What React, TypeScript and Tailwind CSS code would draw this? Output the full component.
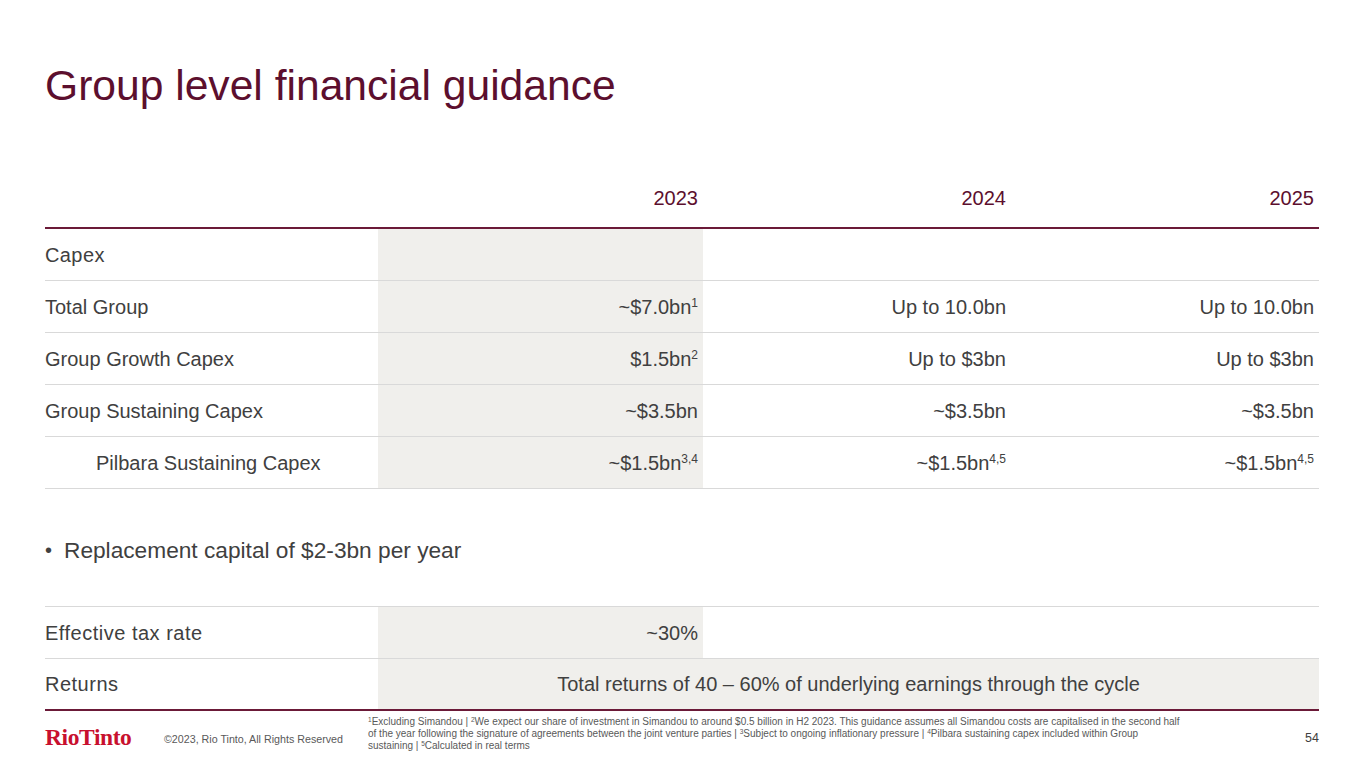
import React from "react";

const sans = { fontFamily: '"Liberation Sans", Arial, sans-serif' };

type Cell = { v: string; sup?: string };
type Row = { label: string; indent?: boolean; cells: Cell[] };

const capexRows: Row[] = [
  {
    label: "Total Group",
    cells: [{ v: "~$7.0bn", sup: "1" }, { v: "Up to 10.0bn" }, { v: "Up to 10.0bn" }],
  },
  {
    label: "Group Growth Capex",
    cells: [{ v: "$1.5bn", sup: "2" }, { v: "Up to $3bn" }, { v: "Up to $3bn" }],
  },
  {
    label: "Group Sustaining Capex",
    cells: [{ v: "~$3.5bn" }, { v: "~$3.5bn" }, { v: "~$3.5bn" }],
  },
  {
    label: "Pilbara Sustaining Capex",
    indent: true,
    cells: [
      { v: "~$1.5bn", sup: "3,4" },
      { v: "~$1.5bn", sup: "4,5" },
      { v: "~$1.5bn", sup: "4,5" },
    ],
  },
];

const grid = "grid grid-cols-[333px_325px_308px_308px]";

function Value({ cell }: { cell: Cell }) {
  return (
    <span>
      {cell.v}
      {cell.sup && <sup className="relative -top-[7px] text-[12px] leading-none">{cell.sup}</sup>}
    </span>
  );
}

function DataRow({ row }: { row: Row }) {
  return (
    <div className={`${grid} h-[52px] border-b border-[#d9d9d9] text-[20px] text-[#404040]`}>
      <div className={`flex items-center ${row.indent ? "pl-[51px]" : ""}`}>{row.label}</div>
      {row.cells.map((c, i) => (
        <div
          key={i}
          className={`flex items-center justify-end pr-[5px] ${i === 0 ? "bg-[#f0efec]" : ""}`}
        >
          <Value cell={c} />
        </div>
      ))}
    </div>
  );
}

export default function App() {
  return (
    <div className="relative h-[768px] w-[1365px] overflow-hidden bg-white" style={sans}>
      <div className="pl-[45px] pr-[46px]">
        <h1 className="h-[106px] pt-[64px] text-[42.6px] leading-none text-[#5c0f2e]">
          Group level financial guidance
        </h1>

        {/* header row */}
        <div className={`${grid} mt-[73px] h-[48px] items-end pb-[14px] text-[20px] text-[#5c0f2e]`}>
          <div />
          <div className="pr-[5px] text-right">2023</div>
          <div className="pr-[5px] text-right">2024</div>
          <div className="pr-[5px] text-right">2025</div>
        </div>
        <div className="h-[2px] bg-[#6b1a38]" />

        <div className={`${grid} h-[52px] border-b border-[#d9d9d9] text-[20px] text-[#404040]`}>
          <div className="flex items-center tracking-[0.4px]">Capex</div>
          <div className="bg-[#f0efec]" />
          <div />
          <div />
        </div>
        {capexRows.map((r) => (
          <DataRow key={r.label} row={r} />
        ))}

        <div className="mt-[48px] flex h-[26px] items-center text-[22.7px] text-[#404040]">
          <span className="w-[19px] text-[20px]">•</span>
          <span>Replacement capital of $2-3bn per year</span>
        </div>

        <div className="mt-[43px] border-t border-[#d9d9d9]">
          <div className={`${grid} h-[52px] border-b border-[#d9d9d9] text-[20px] text-[#404040]`}>
            <div className="flex items-center tracking-[0.5px]">Effective tax rate</div>
            <div className="flex items-center justify-end bg-[#f0efec] pr-[5px]">~30%</div>
            <div />
            <div />
          </div>
          <div className="grid h-[50px] grid-cols-[333px_941px] text-[20px] text-[#404040]">
            <div className="flex items-center tracking-[0.5px]">Returns</div>
            <div className="flex items-center justify-center bg-[#f0efec]">
              Total returns of 40 – 60% of underlying earnings through the cycle
            </div>
          </div>
          <div className="h-[2px] bg-[#6b1a38]" />
        </div>

        {/* footer */}
        <div className="flex items-start pt-[5px]">
          <div
            className="mt-[10px] w-[119px] text-[23.5px] font-bold leading-none tracking-[-0.4px] text-[#c8102e]"
            style={{ fontFamily: '"Liberation Serif", "Times New Roman", serif' }}
          >
            RioTinto
          </div>
          <div className="mt-[18px] w-[204px] text-[10.7px] leading-none text-[#595959]">
            ©2023, Rio Tinto, All Rights Reserved
          </div>
          <p className="w-[860px] text-[10px] leading-[12px] text-[#595959]">
            <sup className="text-[6.5px]">1</sup>Excluding Simandou | <sup className="text-[6.5px]">2</sup>We
            expect our share of investment in Simandou to around $0.5 billion in H2 2023. This guidance assumes
            all Simandou costs are capitalised in the second half
            <br />
            of the year following the signature of agreements between the joint venture parties |{" "}
            <sup className="text-[6.5px]">3</sup>Subject to ongoing inflationary pressure |{" "}
            <sup className="text-[6.5px]">4</sup>Pilbara sustaining capex included within Group
            <br />
            sustaining | <sup className="text-[6.5px]">5</sup>Calculated in real terms
          </p>
          <div className="ml-auto mt-[16px] text-[12.5px] leading-none text-[#404040]">54</div>
        </div>
      </div>
    </div>
  );
}
